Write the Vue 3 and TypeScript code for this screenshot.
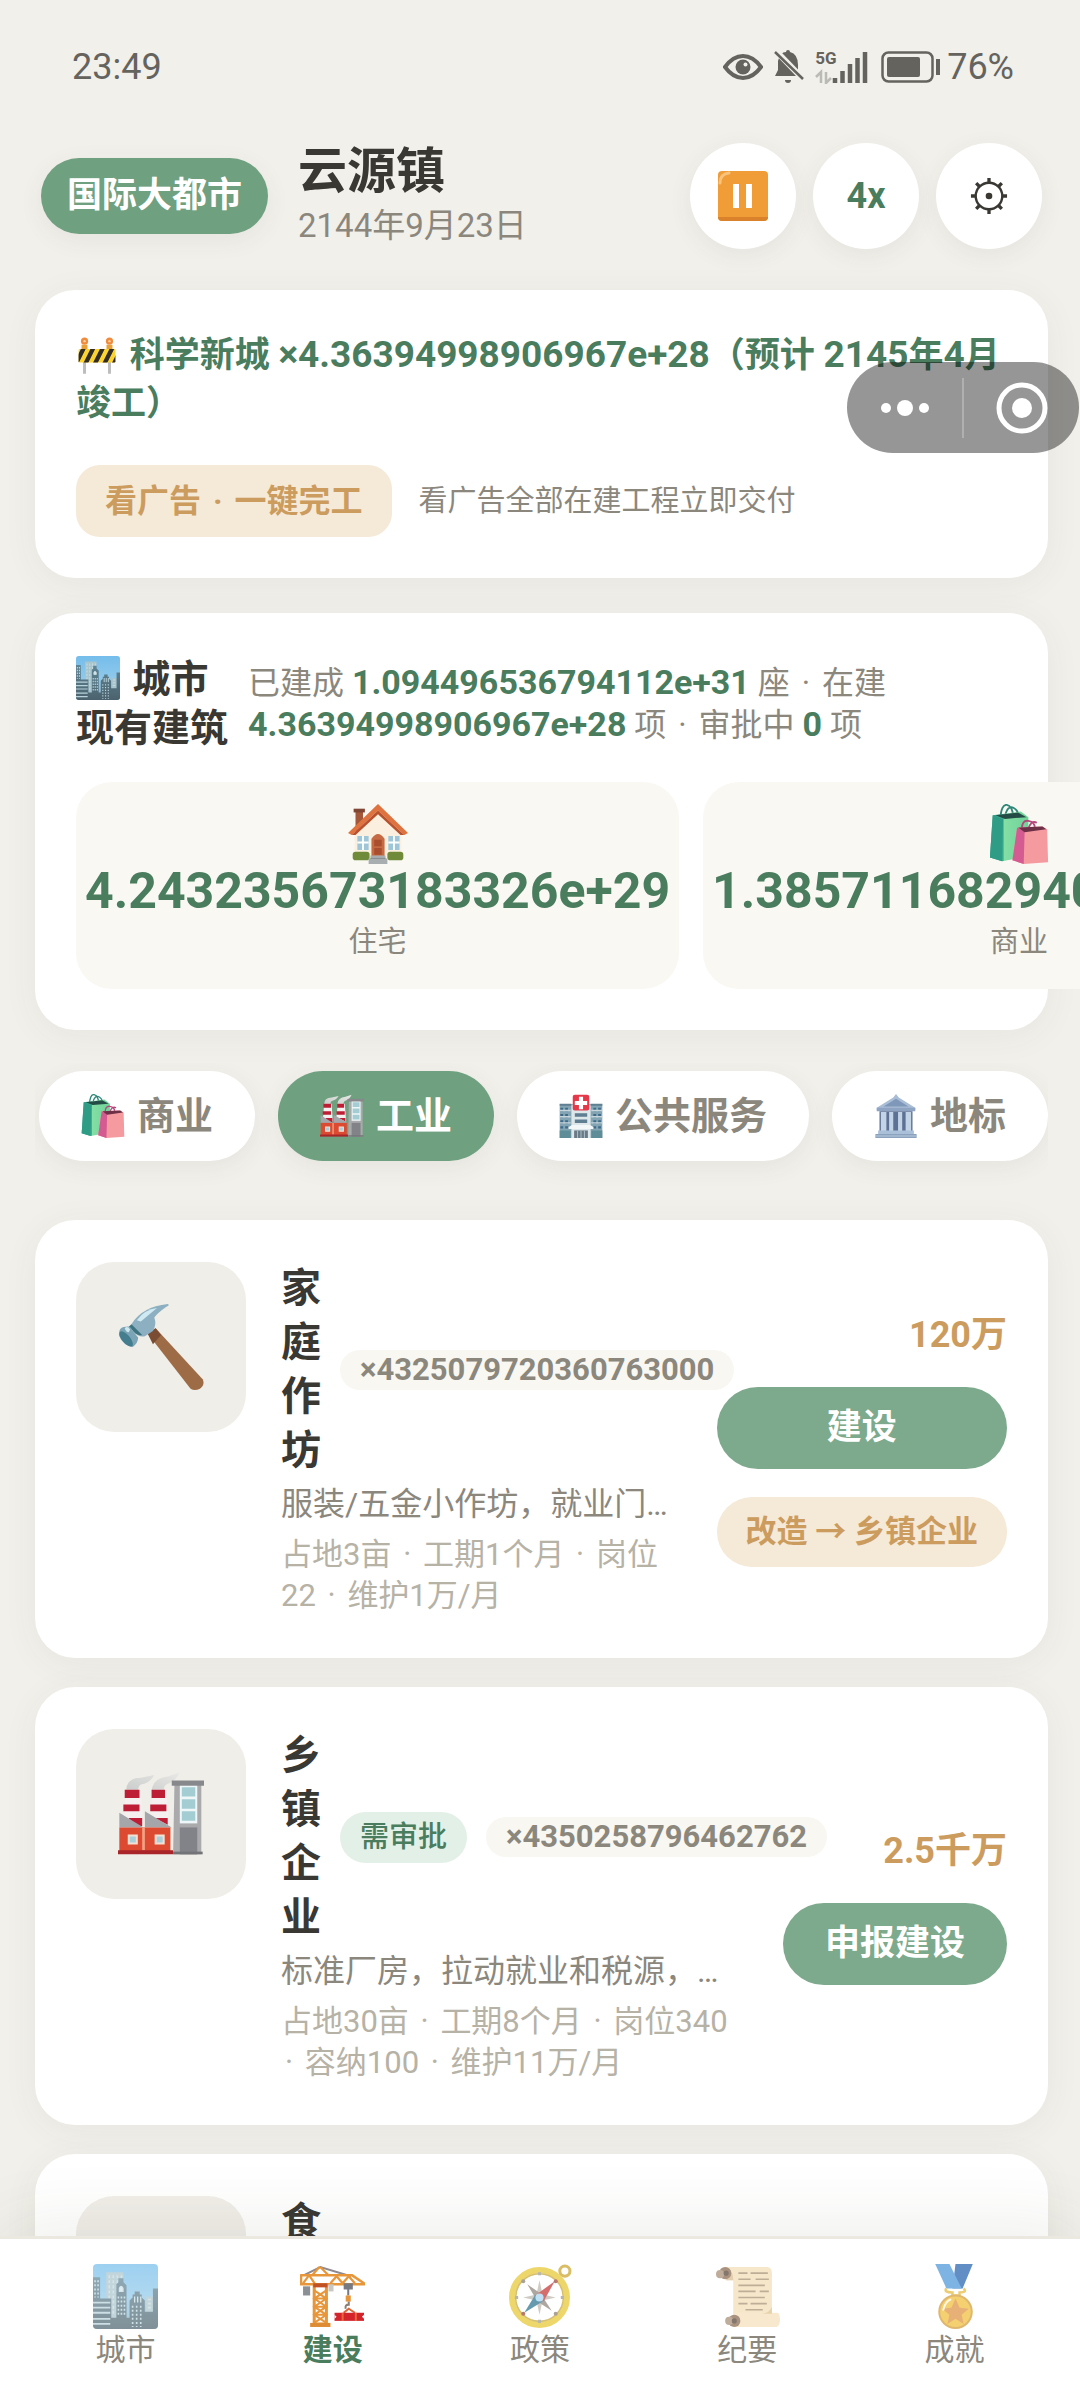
<script setup lang="ts">
interface Tile { icon: string; value: string; label: string }
interface Chip { icon: string; label: string; active?: boolean }
interface Building {
  icon: string
  name: string
  approval?: boolean
  count: string
  desc: string
  meta: string[][]
  price: string
  action: string
  upgrade?: string
}
interface Tab { icon: string; label: string; active?: boolean }

const tiles: Tile[] = [
  { icon: 'house', value: '4.243235673183326e+29', label: '住宅' },
  { icon: 'bags', value: '1.3857116829406052e+29', label: '商业' },
]

const chips: Chip[] = [
  { icon: 'bags', label: '商业' },
  { icon: 'factory', label: '工业', active: true },
  { icon: 'hospital', label: '公共服务' },
  { icon: 'temple', label: '地标' },
]

const buildings: Building[] = [
  {
    icon: 'hammer',
    name: '家庭作坊',
    count: '×4325079720360763000',
    desc: '服装/五金小作坊，就业门槛低，起步首选',
    meta: [['占地3亩', '工期1个月', '岗位'], ['22', '维护1万/月']],
    price: '120万',
    action: '建设',
    upgrade: '改造 → 乡镇企业',
  },
  {
    icon: 'factory',
    name: '乡镇企业',
    approval: true,
    count: '×4350258796462762',
    desc: '标准厂房，拉动就业和税源，有一定污染',
    meta: [['占地30亩', '工期8个月', '岗位340'], ['', '容纳100', '维护11万/月']],
    price: '2.5千万',
    action: '申报建设',
  },
  {
    icon: 'bowl',
    name: '食品加工厂',
    count: '×0',
    desc: '农产品深加工',
    meta: [['占地40亩', '工期10个月']],
    price: '4千万',
    action: '申报建设',
  },
]

const tabs: Tab[] = [
  { icon: 'city', label: '城市' },
  { icon: 'crane', label: '建设', active: true },
  { icon: 'compass', label: '政策' },
  { icon: 'scroll', label: '纪要' },
  { icon: 'medal', label: '成就' },
]
</script>

<template>
  <div class="app">
    <svg class="sprite" aria-hidden="true">
      <defs>
        <linearGradient id="g-sky" x1="0" y1="0" x2="0" y2="1">
          <stop offset="0" stop-color="#74bdec" />
          <stop offset="0.5" stop-color="#8fc8ea" />
          <stop offset="1" stop-color="#8db4c6" />
        </linearGradient>
        <linearGradient id="g-tower" x1="0" y1="0" x2="0" y2="1">
          <stop offset="0" stop-color="#5f8596" />
          <stop offset="1" stop-color="#4b626d" />
        </linearGradient>
        <linearGradient id="g-green" x1="0" y1="0" x2="1" y2="0">
          <stop offset="0" stop-color="#2f9d86" />
          <stop offset="0.35" stop-color="#3fb391" />
          <stop offset="0.36" stop-color="#84dfa4" />
          <stop offset="1" stop-color="#6fd39a" />
        </linearGradient>
        <linearGradient id="g-smoke" x1="0" y1="1" x2="1" y2="0">
          <stop offset="0" stop-color="#c9cccb" />
          <stop offset="1" stop-color="#e9e9e6" />
        </linearGradient>
        <clipPath id="c-city"><rect width="64" height="64" rx="4" /></clipPath>
        <clipPath id="c-board"><rect x="1" y="20" width="62" height="23" rx="2" /></clipPath>
      </defs>

      <symbol id="city" viewBox="0 0 64 64">
        <g clip-path="url(#c-city)">
          <rect width="64" height="64" fill="url(#g-sky)" />
          <path d="M13 8h17v46H13zM52 32h8v20h-8z" fill="#a8c4cd" />
          <path d="M16 11v40M20 11v40M24 11v40M28 11v20M54 35h5M54 39h5M54 43h5" stroke="#c6dade" stroke-width="1.6" stroke-dasharray="3 2" />
          <path d="M0 13h7v22H0zM23 20l2-2v-4h5v4l3 3v32H23zM36 36l3-3v-3h2v-3h5v3h2v3l3 3v28H36zM59 24h5v40H51V47h8zM0 34h18v30H0zM18 53h20v11H18z" fill="url(#g-tower)" />
          <path d="M0 38h17M0 43h17M0 48h17M0 54h17M0 59h17" stroke="#b8d2da" stroke-width="1.8" />
          <path d="M2 16v17M5 16v17M25 32v18M28 32v18M31 32v18M39 41v21M43 41v21M47 41v21" stroke="#bcd6de" stroke-width="1.6" stroke-dasharray="2 2" />
          <path d="M26 27v-3q1.500-4 3.500 0v3zM41 32v6M44 32v6M47 32v6" fill="#d4e5e9" stroke="#c4dbe2" stroke-width="1.300" />
        </g>
      </symbol>

      <symbol id="house" viewBox="0 0 64 64">
        <path d="M8 6h8v24H8z" fill="#a3583a" />
        <path d="M6 5h12v4H6z" fill="#7f4633" />
        <path d="M7 31L32 4l25 27v27H7z" fill="#fbf0df" />
        <path d="M32 0L0 31l4 2L32 7l28 26 4-2z" fill="#df7340" />
        <path d="M32 7L4 33h4L32 11l24 22h4z" fill="#b9512e" />
        <path d="M25 56V37q7-10 14 0v19z" fill="#c66a43" />
        <path d="M28 38h8v7h-8zM28 47h8v7h-8z" fill="#a94e2f" />
        <path d="M10 34h12v15H10zM43 34h12v15H43z" fill="#9fc6d8" />
        <path d="M16 34v15M10 41h12M49 34v15M43 41h12" stroke="#fff" stroke-width="2" />
        <rect x="5" y="51" width="18" height="9" rx="3" fill="#6f8b3a" />
        <rect x="42" y="51" width="17" height="9" rx="3" fill="#6f8b3a" />
        <path d="M24 55h16v3h2v6H22v-6h2z" fill="#a8adb0" />
        <path d="M24 58h16" stroke="#83898d" stroke-width="1" />
      </symbol>

      <symbol id="bags" viewBox="0 0 64 64">
        <path d="M12 17Q13 0 19 1t7 13M17 13Q20 1 26 4t5 11" fill="none" stroke="#2d8878" stroke-width="2" />
        <path d="M4 12l30-4 8 6v42L14 61 1 57z" fill="url(#g-green)" />
        <path d="M7 12l24-3 9 5-23 2z" fill="#254b46" />
        <path d="M4 12l11 4-1 45L1 57z" fill="#2f9d86" />
        <path d="M35 27Q35 17 42 18t7 8M42 26q3-9 9-6" fill="none" stroke="#b4477b" stroke-width="2" />
        <path d="M30 25l27-1 5 3 1 35-26 2-12-4z" fill="#f59a9f" />
        <path d="M30 25l8 4-1 35-12-4z" fill="#d45a92" />
        <path d="M31 25l26-1 4 3-23 3z" fill="#6d3046" />
      </symbol>

      <symbol id="factory" viewBox="0 0 64 64">
        <path d="M6 15Q6 5 17 5L27 3Q24 9 17 10q-2 1-2 5zM25 15Q26 5 37 4l9-3q-3 7-10 9-2 1-2 5z" fill="url(#g-smoke)" />
        <path d="M6 14h11l1.500 26H4zM26 14h10l2 26H23z" fill="#f6eff0" />
        <path d="M5 14h11v6H5zM25 14h10v6H25zM4 25h12v5H4zM24 25h12v5H24zM8 35h10v6h-8zM27 35h10v5z" fill="#be1e35" />
        <path d="M1 31l18 11H1zM20 30l20 12H20z" fill="#a4a6aa" />
        <path d="M1 42h38v18H1z" fill="#db4a31" />
        <path d="M19 42v17" stroke="#f3a183" stroke-width="2" />
        <path d="M0 59h41v3H0z" fill="#a92529" />
        <path d="M42 10h20v52H41z" fill="#aaaaad" />
        <path d="M40 7h24v4H40z" fill="#87888c" />
        <path d="M46 11h13v28H46z" fill="#eef6f7" />
        <path d="M47.500 12h10v7h-10zM47.500 21h10v7h-10zM47.500 30h10v7h-10z" fill="#a4cdd3" />
        <path d="M46 42h13v20H46z" fill="#828388" />
        <path d="M41 60h22v2H41z" fill="#737478" />
        <path d="M8 48h6v6H8zM28 48h6v6h-6z" fill="#a9cfda" stroke="#f5dfd3" stroke-width="1.500" />
      </symbol>

      <symbol id="hospital" viewBox="0 0 64 64">
        <path d="M1 15h62v49H1z" fill="#82a4b3" />
        <path d="M18 16h28v48H18z" fill="#dde7ea" />
        <path d="M1 14h17v3H1zM46 14h17v3H46z" fill="#607f91" />
        <path d="M4 20v30M11 20v30M52 20v30M59 20v30" stroke="#3f6a88" stroke-width="4" stroke-dasharray="5 4" />
        <path d="M1 24h16M1 33h16M1 42h16M47 24h16M47 33h16M47 42h16" stroke="#c8d6dc" stroke-width="2" />
        <path d="M23 28h18v5H23zM23 37h18v5H23z" fill="#5f7e91" />
        <path d="M14 48l5-3h26l5 3v3H14z" fill="#f3f7f8" />
        <path d="M22 53h20v11H22z" fill="#6b7b86" />
        <path d="M27 53v11M32 53v11M37 53v11" stroke="#a9bdc7" stroke-width="1.500" />
        <path d="M1 53h16v11H1zM47 53h16v11H47z" fill="#5e8c97" />
        <rect x="20" y="1" width="24" height="23" rx="3" fill="#e5394a" />
        <path d="M29 4h6v6h6v6h-6v6h-6v-6h-6v-6h6z" fill="#fff" />
      </symbol>

      <symbol id="temple" viewBox="0 0 64 64">
        <path d="M32 0l4 5 24 15v4H4v-4L28 5z" fill="#a9bdd6" />
        <path d="M32 7l18 11H14z" fill="#7f97b8" />
        <path d="M4 20h56v5H4z" fill="#8ea4c2" />
        <path d="M8 25h48v31H8z" fill="#5d7194" />
        <path d="M10 26h8v29h-8zM22 26h6v29h-6zM35 26h6v29h-6zM46 26h8v29h-8z" fill="#c4d4e7" />
        <path d="M6 53h52v5H6z" fill="#aabfd8" />
        <path d="M2 58h60v6H2z" fill="#8ba2bf" />
        <path d="M2 61h60" stroke="#b9cade" stroke-width="1.500" />
      </symbol>

      <symbol id="barrier" viewBox="0 0 64 64">
        <path d="M11 20v42M53 20v42" stroke="#bdbdbd" stroke-width="5" />
        <circle cx="11" cy="7" r="6" fill="#f08a3c" />
        <circle cx="53" cy="7" r="6" fill="#f08a3c" />
        <circle cx="11" cy="7" r="2" fill="#ffd3a0" />
        <circle cx="53" cy="7" r="2" fill="#ffd3a0" />
        <path d="M6 13h10v7H6zM48 13h10v7H48z" fill="#e8a23a" />
        <g clip-path="url(#c-board)">
          <path d="M0 18h64v28H0z" fill="#fbd432" />
          <path d="M-8 46L6 18h8L0 46zM8 46l14-28h8L16 46zM24 46l14-28h8L32 46zM40 46l14-28h8L48 46zM56 46l14-28h8L64 46z" fill="#2e2b28" />
        </g>
      </symbol>

      <symbol id="hammer" viewBox="0 0 64 64">
        <path d="M22 22l6-4 35 38q2 4-2 7-4 2-7 0z" fill="#9d6b45" />
        <path d="M22 22l6-4 4 5-6 7z" fill="#7a4c34" />
        <path d="M10 15Q18 2 37 0q2 1-1 2-7 5-9 8 2 5-1 10l-6 4q-5 1-9-4z" fill="#8cb0c1" />
        <path d="M14 12Q20 4 29 3q-6 5-12 10z" fill="#cfeaf2" />
        <path d="M10 15l8 8q-2 1-5-1l-5-5z" fill="#3e7480" />
        <path d="M1 20q1-3 5-3 3-1 5 3l4 5q0 4-4 7-7-1-10-8z" fill="#7ba5b6" />
        <ellipse cx="6" cy="26" rx="3" ry="7" transform="rotate(-40 6 26)" fill="#437d8e" />
        <path d="M5 18q2-2 4 1l-1 2q-2 0-3-3z" fill="#cfe8f0" />
      </symbol>

      <symbol id="bowl" viewBox="0 0 64 64">
        <ellipse cx="32" cy="12" rx="14" ry="11" fill="#a8a59e" />
      </symbol>

      <symbol id="crane" viewBox="0 0 64 64">
        <path d="M4 11L20 3l30 9" fill="none" stroke="#8e8a90" stroke-width="2" />
        <path d="M3 22h7v9H3z" fill="#8b9095" />
        <path d="M1 20V11h50l12 8v1z" fill="none" stroke="#e8963a" stroke-width="2.500" stroke-linejoin="round" />
        <path d="M3 19l6-8 6 9M19 3l-7 8M20 3l8 8M30 19l6-7 6 7 6-7 6 7" fill="none" stroke="#e8963a" stroke-width="2.200" />
        <path d="M14 21h12v38H14z" fill="none" stroke="#e8963a" stroke-width="3" />
        <path d="M14 26l12 8-12 8 12 8-12 8M26 26l-12 8 12 8-12 8 12 8M14 34h12M14 42h12M14 50h12" fill="none" stroke="#e8963a" stroke-width="2" />
        <path d="M13 19h14v4H13z" fill="#c25025" />
        <path d="M28 20h5v7h-5z" fill="#c7c8c4" />
        <path d="M10 58h20v4H10z" fill="#dd8c34" />
        <path d="M44 20h7v4h-7zM47.500 24v7" fill="#777a80" stroke="#777a80" stroke-width="2" />
        <path d="M45 31h5v6h-5z" fill="#e6953b" />
        <path d="M48 37v3q-4 0-3 4" fill="none" stroke="#8b8078" stroke-width="2" />
        <path d="M43 48l5-4 6 4" fill="none" stroke="#d9683a" stroke-width="2" />
        <path d="M34 48h29v8H34z" fill="#d3242c" />
        <path d="M34 50l2 2-2 2zM63 50l-2 2 2 2z" fill="#fff" />
        <path d="M42 48v8M55 48v8" stroke="#e9653c" stroke-width="2" />
      </symbol>

      <symbol id="compass" viewBox="0 0 64 64">
        <circle cx="56" cy="7" r="5" fill="none" stroke="#c9a227" stroke-width="3" />
        <circle cx="31" cy="33" r="27" fill="#fff" stroke="#e6c52c" stroke-width="6" />
        <circle cx="31" cy="33" r="23.500" fill="none" stroke="#c5a431" stroke-width="1.500" />
        <path d="M31 16l3 14 13 3-13 3-3 14-3-14-13-3 13-3z" fill="#bbb6ab" />
        <path d="M19 20l13 9 11 17-14-9z" fill="#8c8378" />
        <path d="M46 17L35 37l-7-7z" fill="#c4302f" />
        <path d="M16 48l11-18 7 7z" fill="#26708c" />
        <circle cx="31" cy="33" r="4" fill="#a4d5ee" />
        <circle cx="15" cy="17" r="2" fill="#857a6c" />
        <circle cx="47" cy="17" r="2" fill="#9a3e31" />
        <circle cx="15" cy="49" r="2" fill="#9a3e31" />
        <circle cx="47" cy="49" r="2" fill="#857a6c" />
        <path d="M31 8v3M31 55v3M7 33h3M52 33h3" stroke="#99978d" stroke-width="3" />
      </symbol>

      <symbol id="scroll" viewBox="0 0 64 64">
        <path d="M10 3h42q4 1 4 6v43H18V16h-7z" fill="#f3dcb5" />
        <path d="M10 3q8 2 8 13h-7z" fill="#d8b98c" />
        <circle cx="10" cy="9" r="6" fill="#856549" />
        <circle cx="5" cy="10" r="4" fill="#a58a71" />
        <circle cx="11" cy="9" r="2.500" fill="#4f3d30" />
        <path d="M18 48h44q2 2 2 7t-3 7H18z" fill="#f5dfba" />
        <path d="M18 49h38V42q-2 6-10 7z" fill="#dcc088" />
        <circle cx="19" cy="56" r="6" fill="#856549" />
        <circle cx="14" cy="56" r="4" fill="#a58a71" />
        <circle cx="19" cy="56" r="2.500" fill="#4f3d30" />
        <path d="M23 9h9M35 9h17M23 15h12M40 15h13M23 21h26M23 27h17M44 27h9M23 33h26M23 39h9M35 39h16M30 45h17" stroke="#a48c6c" stroke-width="1.600" />
      </symbol>

      <symbol id="medal" viewBox="0 0 64 64">
        <path d="M33 0h17L40 24H30z" fill="#205fae" />
        <path d="M13 0h14l12 24H24z" fill="#4795d8" />
        <path d="M24 24q-3 4 6 4v3h7v-3q8 0 4-4" fill="none" stroke="#e4b93a" stroke-width="2.500" />
        <circle cx="33" cy="47" r="16" fill="#f0bd34" stroke="#d29a33" stroke-width="2" />
        <path d="M33 34l4 9 9 1-7 6 2 9-8-5-8 5 2-9-7-6 9-1z" fill="#dc8f3d" />
        <path d="M21 45q2-8 7-10" fill="none" stroke="#fff7da" stroke-width="2" stroke-linecap="round" />
      </symbol>
    </svg>

    <div class="status">
      <span>23:49</span>
      <div class="status-icons">
        <svg class="eye" viewBox="0 0 40 28" aria-hidden="true">
          <path d="M2 14Q10 3 20 3t18 11Q30 25 20 25T2 14z" fill="none" stroke="currentColor" stroke-width="4" />
          <circle cx="20" cy="14" r="7.500" fill="currentColor" />
          <circle cx="22.500" cy="11.500" r="2" fill="#f1f0eb" />
        </svg>
        <svg class="bell" viewBox="0 0 32 36" aria-hidden="true">
          <path d="M5 12Q7 3 13 3q0-2 2-2t2 2q8 2 8 13v5l3 6H2l3-6z" fill="currentColor" />
          <path d="M12 31h6q0 3-3 3t-3-3z" fill="currentColor" />
          <path d="M1 0l30 31" stroke="#f1f0eb" stroke-width="6" />
          <path d="M2 3l28 27" stroke="currentColor" stroke-width="2.500" />
        </svg>
        <div class="signal">
          <span class="net">5G</span>
          <svg viewBox="0 0 54 34" aria-hidden="true">
            <path d="M6 33V22l-5 5M11 22v11l5-5" fill="none" stroke="#bcbab4" stroke-width="2.500" />
            <path d="M20 28v5M27.500 21v12M35 14v19M42.500 8v25M50 2v31" stroke="currentColor" stroke-width="4.500" stroke-linecap="butt" />
          </svg>
        </div>
        <svg class="battery" viewBox="0 0 60 32" aria-hidden="true">
          <rect x="1.500" y="1.500" width="50" height="29" rx="6" fill="none" stroke="currentColor" stroke-width="2.500" />
          <rect x="6" y="6" width="33" height="20" rx="2" fill="currentColor" />
          <path d="M57 8v16" stroke="currentColor" stroke-width="4" />
        </svg>
        <span>76%</span>
      </div>
    </div>

    <header class="header">
      <span class="rank">国际大都市</span>
      <div class="town">
        <h1>云源镇</h1>
        <time datetime="2144-09-23">2144年9月23日</time>
      </div>
      <div class="controls">
        <button type="button" class="round" aria-label="暂停">
          <svg class="pause" viewBox="0 0 50 50" aria-hidden="true">
            <rect width="50" height="50" rx="4" fill="#f09d38" />
            <path d="M2 12Q2 3 11 2" fill="none" stroke="#f9c37c" stroke-width="3" stroke-linecap="round" />
            <path d="M0 46v1q1 3 4 3h42q3 0 4-3v-1z" fill="#d9822b" />
            <path d="M15 13h6v24h-6zM28 13h6v24h-6z" fill="#fff" />
          </svg>
        </button>
        <button type="button" class="round speed">4x</button>
        <button type="button" class="round" aria-label="设置">
          <svg class="gear" viewBox="-20 -20 40 40" aria-hidden="true">
            <circle r="14" fill="none" stroke="currentColor" stroke-width="2.500" />
            <circle r="3.500" fill="currentColor" />
            <path d="M0-14v-5M0 14v5M-14 0h-5M14 0h5M-10-10l-3.500-3.500M10-10l3.500-3.500M-10 10l-3.500 3.500M10 10l3.500 3.500" stroke="currentColor" stroke-width="3.500" />
          </svg>
        </button>
      </div>
    </header>

    <main class="main">
      <section class="card works">
        <p class="works-line">
          <svg class="emoji" aria-hidden="true"><use href="#barrier" /></svg>
          科学新城 <span class="num">×4.36394998906967e+28</span>（预计 <span class="num">2145</span>年<span class="num">4</span>月竣工）
        </p>
        <div class="ad-row">
          <button type="button" class="ad">看广告 <span class="sep">·</span> 一键完工</button>
          <span class="hint">看广告全部在建工程立即交付</span>
        </div>
      </section>

      <section class="card overview">
        <div class="overview-head">
          <h2><svg class="emoji" aria-hidden="true"><use href="#city" /></svg> 城市<br>现有建筑</h2>
          <p>
            已建成 <b>1.094496536794112e+31</b> 座 <span class="sep">·</span> 在建<br>
            <b>4.36394998906967e+28</b> 项 <span class="sep">·</span> 审批中 <b>0</b> 项
          </p>
        </div>
        <div class="tiles">
          <div v-for="t in tiles" :key="t.label" class="tile">
            <svg aria-hidden="true"><use :href="'#' + t.icon" /></svg>
            <strong>{{ t.value }}</strong>
            <span>{{ t.label }}</span>
          </div>
        </div>
      </section>

      <div class="chips">
        <button v-for="c in chips" :key="c.label" type="button" class="chip" :class="{ active: c.active }">
          <svg class="emoji" aria-hidden="true"><use :href="'#' + c.icon" /></svg>
          {{ c.label }}
        </button>
      </div>

      <div class="list">
        <article v-for="b in buildings" :key="b.name" class="card building">
          <div class="thumb">
            <svg aria-hidden="true"><use :href="'#' + b.icon" /></svg>
          </div>
          <div class="body">
            <div class="name-row">
              <h3>{{ b.name }}</h3>
              <span v-if="b.approval" class="tag approval">需审批</span>
              <span class="tag">{{ b.count }}</span>
            </div>
            <p class="desc">{{ b.desc }}</p>
            <p class="meta">
              <span v-for="(line, li) in b.meta" :key="li" class="meta-line">
                <template v-for="(m, mi) in line" :key="mi"><template v-if="mi > 0">{{ ' ' }}<span class="sep">·</span>{{ ' ' }}</template>{{ m }}</template>
              </span>
            </p>
          </div>
          <div class="actions">
            <strong class="price">{{ b.price }}</strong>
            <button type="button" class="build">{{ b.action }}</button>
            <button v-if="b.upgrade" type="button" class="upgrade">{{ b.upgrade }}</button>
          </div>
        </article>
      </div>
    </main>

    <nav class="tabs">
      <a v-for="t in tabs" :key="t.label" href="#" class="tab" :class="{ active: t.active }">
        <svg aria-hidden="true"><use :href="'#' + t.icon" /></svg>
        <span>{{ t.label }}</span>
      </a>
    </nav>

    <div class="capsule">
      <button type="button" aria-label="更多">
        <svg viewBox="0 0 50 20" aria-hidden="true">
          <circle cx="6" cy="10" r="5" />
          <circle cx="25" cy="10" r="8" />
          <circle cx="44" cy="10" r="5" />
        </svg>
      </button>
      <button type="button" aria-label="关闭">
        <svg viewBox="0 0 52 52" aria-hidden="true">
          <circle cx="26" cy="26" r="23" fill="none" stroke="#fff" stroke-width="5" />
          <circle cx="26" cy="26" r="10" />
        </svg>
      </button>
    </div>
  </div>
</template>

<style>
body {
  background: #f1f0eb;
}
</style>

<style scoped>
.app {
  position: relative;
  display: flex;
  flex-direction: column;
  height: 100vh;
  overflow: hidden;
  background: #f1f0eb;
  color: #3a3833;
  font-family: Roboto, "Noto Sans CJK SC", sans-serif;
}
.app * {
  box-sizing: border-box;
}
h1, h2, h3, p {
  margin: 0;
}
button {
  border: 0;
  padding: 0;
  font: inherit;
  color: inherit;
  cursor: pointer;
}
svg {
  display: block;
}
.sprite {
  position: absolute;
  width: 0;
  height: 0;
}
.emoji {
  display: inline-block;
  width: 44px;
  height: 44px;
  margin-right: 3px;
  vertical-align: -8px;
}
.sep {
  margin: 0 4px;
}

.status {
  display: flex;
  flex: none;
  align-items: center;
  justify-content: space-between;
  height: 133px;
  padding: 0 66px 0 72px;
  font-size: 36px;
  color: #65635e;
}
.status-icons {
  display: flex;
  align-items: center;
}
.eye {
  width: 40px;
  height: 28px;
  margin-right: 10px;
}
.bell {
  width: 32px;
  height: 36px;
  margin-right: 10px;
}
.signal {
  position: relative;
  margin-right: 12px;
}
.signal svg {
  width: 54px;
  height: 34px;
}
.net {
  position: absolute;
  top: 0;
  left: 0;
  font-size: 17px;
  line-height: 17px;
  font-weight: 700;
}
.battery {
  width: 60px;
  height: 32px;
  margin-right: 6px;
}

.header {
  display: flex;
  flex: none;
  align-items: center;
  padding: 9px 38px 40px 41px;
}
.rank {
  padding: 0 26px;
  border-radius: 38px;
  background: #6fa07f;
  box-shadow: 0 6px 24px rgba(90, 70, 50, 0.07);
  color: #fff;
  font-size: 35px;
  line-height: 76px;
  font-weight: 700;
}
.town {
  flex: 1;
  margin-left: 30px;
}
h1 {
  font-size: 49px;
  line-height: 60px;
}
.town time {
  display: block;
  font-size: 33px;
  line-height: 48px;
  color: #8b877d;
}
.controls {
  display: flex;
  gap: 17px;
}
.round {
  display: grid;
  place-items: center;
  width: 106px;
  height: 106px;
  border-radius: 50%;
  background: #fff;
  box-shadow: 0 6px 24px rgba(90, 70, 50, 0.07);
}
.speed {
  font-size: 36px;
  font-weight: 700;
  color: #4a7c5e;
}
.pause {
  width: 50px;
  height: 50px;
}
.gear {
  width: 38px;
  height: 38px;
}

.main {
  flex: 1;
  min-height: 0;
  overflow: hidden;
  padding: 0 32px 0 35px;
  margin-top: -40px;
  padding-top: 40px;
}
.card {
  border-radius: 40px;
  background: #fff;
  box-shadow: 0 6px 36px rgba(70, 65, 40, 0.06);
}
.works {
  padding: 42px 41px 41px;
}
.works-line {
  font-size: 35px;
  line-height: 48px;
  font-weight: 700;
  color: #4a7c5e;
}
.works-line .emoji {
  width: 42px;
  height: 38px;
}
.num {
  font-size: 37px;
  line-height: 40px;
}
.ad-row {
  display: flex;
  align-items: center;
  gap: 27px;
  margin-top: 37px;
}
.ad {
  padding: 0 29px;
  border-radius: 24px;
  background: #f5e9d8;
  color: #cb9c5e;
  font-size: 32px;
  line-height: 72px;
  font-weight: 700;
}
.hint {
  font-size: 29px;
  line-height: 40px;
  color: #8b877d;
}

.overview {
  margin-top: 35px;
  padding: 42px 41px 41px;
}
.overview-head {
  display: flex;
  align-items: center;
  gap: 20px;
}
h2 {
  flex: none;
  font-size: 38px;
  line-height: 49px;
}
.overview-head p {
  font-size: 32px;
  line-height: 42px;
  white-space: nowrap;
  color: #8b877d;
}
.overview-head b {
  font-size: 34px;
  line-height: 40px;
  color: #4a7c5e;
}
.tiles {
  display: flex;
  gap: 24px;
  margin-top: 29px;
}
.tile {
  display: flex;
  flex: none;
  flex-direction: column;
  align-items: center;
  padding: 22px 9px;
  border-radius: 36px;
  background: #f9f8f3;
}
.tile svg {
  width: 60px;
  height: 60px;
}
.tile strong {
  font-size: 50px;
  line-height: 54px;
  color: #4a7c5e;
}
.tile span {
  font-size: 29px;
  line-height: 49px;
  color: #8b877d;
}

.chips {
  display: flex;
  gap: 23px;
  overflow: hidden;
  margin-top: 33px;
  padding: 8px 0 30px 4px;
}
.chip {
  display: flex;
  flex: none;
  align-items: center;
  gap: 9px;
  height: 90px;
  padding: 0 42px;
  border-radius: 45px;
  background: #fff;
  box-shadow: 0 6px 24px rgba(90, 70, 50, 0.07);
  color: #8b877d;
  font-size: 38px;
  line-height: 48px;
  font-weight: 700;
}
.chip.active {
  background: #6fa07f;
  color: #fff;
}

.list {
  display: flex;
  flex-direction: column;
  gap: 29px;
  margin-top: 29px;
}
.building {
  display: flex;
  align-items: center;
  gap: 35px;
  padding: 42px 41px;
}
.thumb {
  display: grid;
  flex: none;
  align-self: flex-start;
  place-items: center;
  width: 170px;
  height: 170px;
  border-radius: 38px;
  background: #f0eee8;
}
.thumb svg {
  width: 86px;
  height: 86px;
}
.body {
  flex: 1;
  min-width: 0;
}
.name-row {
  display: flex;
  align-items: center;
  gap: 19px;
}
h3 {
  width: 40px;
  font-size: 40px;
  line-height: 54px;
}
.tag {
  flex: none;
  padding: 0 20px;
  border-radius: 26px;
  background: #f8f7f2;
  color: #8b877d;
  font-size: 31px;
  line-height: 40px;
  font-weight: 700;
}
.approval {
  background: #e3f0e7;
  color: #4a7c5e;
  font-size: 29px;
  line-height: 51px;
  font-weight: 500;
}
.desc {
  overflow: hidden;
  margin-top: 4px;
  font-size: 32px;
  line-height: 44px;
  white-space: nowrap;
  text-overflow: ellipsis;
  color: #8b877d;
}
.meta {
  margin-top: 8px;
  font-size: 31px;
  line-height: 41px;
  color: #b6b2a6;
}
.meta-line {
  display: block;
  white-space: nowrap;
}
.actions {
  position: relative;
  display: flex;
  flex: none;
  flex-direction: column;
  gap: 28px;
}
.price {
  font-size: 36px;
  line-height: 48px;
  text-align: right;
  color: #cb9c5e;
}
.build {
  padding: 0 42px;
  border-radius: 41px;
  background: #7da98c;
  color: #fff;
  font-size: 35px;
  line-height: 82px;
  font-weight: 700;
}
.upgrade {
  padding: 0 29px;
  border-radius: 35px;
  background: #f5e9d8;
  color: #cb9c5e;
  font-size: 31px;
  line-height: 70px;
  font-weight: 700;
}

.tabs {
  position: relative;
  display: flex;
  flex: none;
  padding: 25px 22px 27px;
  border-top: 3px solid #ebe8e0;
  background: #fff;
  box-shadow: 0 -6px 72px rgba(70, 65, 40, 0.1);
}
.tab {
  display: flex;
  flex: 1;
  flex-direction: column;
  align-items: center;
  color: #8b877d;
  font-size: 30px;
  line-height: 42px;
  text-decoration: none;
}
.tab svg {
  width: 65px;
  height: 65px;
  opacity: 0.7;
}
.tab.active {
  color: #4a7c5e;
  font-weight: 700;
}
.tab.active svg {
  opacity: 1;
}

.capsule {
  position: absolute;
  top: 362px;
  right: 1px;
  display: flex;
  align-items: center;
  width: 232px;
  height: 91px;
  border-radius: 46px;
  background: rgba(0, 0, 0, 0.41);
}
.capsule button {
  display: grid;
  flex: 1;
  place-items: center;
  height: 60px;
  background: transparent;
}
.capsule button + button {
  border-left: 2px solid rgba(255, 255, 255, 0.25);
}
.capsule svg {
  height: 52px;
  fill: #fff;
}
.capsule button:first-child svg {
  width: 50px;
  height: 20px;
}
</style>
